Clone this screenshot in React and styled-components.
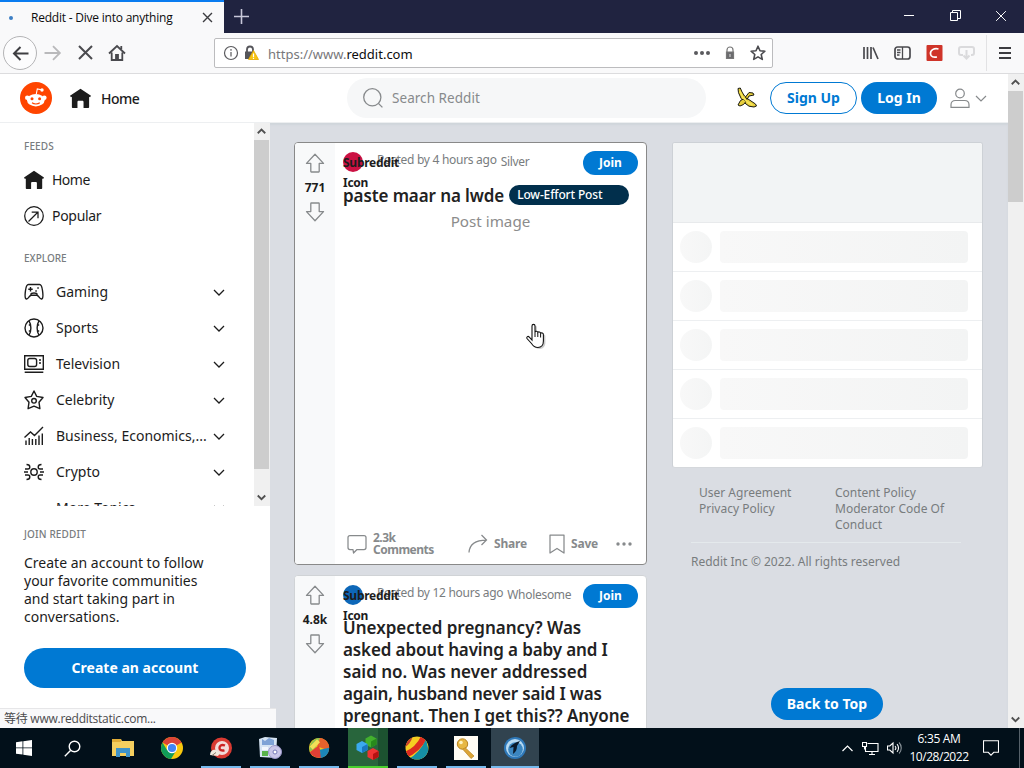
import React from "react";
import styled, { createGlobalStyle, css } from "styled-components";

const GlobalStyle = createGlobalStyle`
  * { box-sizing: border-box; }
  html, body { margin: 0; padding: 0; overflow: hidden; }
  body { font-family: "Noto Sans", "Open Sans", sans-serif; color: #1c1c1c; }
  svg { display: block; flex: none; }
  button { font-family: inherit; margin: 0; padding: 0; border: 0; }
`;

const Screen = styled.div`
  width: 1024px;
  height: 768px;
  display: flex;
  flex-direction: column;
  overflow: hidden;
  background: #dadde3;
`;

const Label = styled.span`
  white-space: nowrap;
  letter-spacing: ${(p) => p.$ls || 0}px;
`;

/* ---------- Browser chrome ---------- */

const TitleBar = styled.div`
  height: 33px;
  flex: none;
  display: flex;
  background: #202340;
`;

const Tab = styled.div`
  width: 224px;
  height: 33px;
  display: flex;
  align-items: center;
  border-top: 2px solid #0a7cf0;
  background: #f9f9fa;
  font: 12px/16px "Open Sans", sans-serif;
  color: #0c0c0d;
`;

const Throbber = styled.i`
  width: 4px;
  height: 4px;
  border-radius: 50%;
  margin: 0 18px 0 9px;
  background: #3d7fc4;
`;

const TabClose = styled.div`
  margin-left: auto;
  padding-right: 11px;
`;

const NewTab = styled.div`
  padding: 9px 0 0 10px;
`;

const WindowControls = styled.div`
  margin-left: auto;
  display: flex;
  align-items: center;
  gap: 34.5px;
  padding: 0 17px 2px 0;
`;

const NavBar = styled.div`
  height: 41px;
  flex: none;
  display: flex;
  align-items: center;
  padding-left: 3px;
  background: #f9f9fa;
  border-bottom: 1px solid #dcdcde;
`;

const BackButton = styled.div`
  width: 34px;
  height: 34px;
  margin-right: 7px;
  display: flex;
  align-items: center;
  justify-content: center;
  border: 1px solid #b4b4b6;
  border-radius: 50%;
  background: #fcfcfd;
`;

const NavIcons = styled.div`
  display: flex;
  gap: 14.5px;
`;

const AddressBar = styled.div`
  width: 559px;
  height: 30px;
  margin-left: 88px;
  display: flex;
  align-items: center;
  padding: 0 6px 0 8px;
  border: 1px solid #bcbcbe;
  border-radius: 2px;
  background: #fff;
  font: 13px/18px "Noto Sans", sans-serif;
  color: #77777a;
  b { font-weight: 400; color: #0c0c0d; }
`;

const UrlText = styled(Label)`
  margin-left: 12px;
  padding-top: 2px;
  flex: 1;
`;

const UrlActions = styled.div`
  display: flex;
  align-items: center;
  gap: 12px;
`;

const ToolIcons = styled.div`
  margin-left: auto;
  height: 40px;
  display: flex;
  align-items: center;
  gap: 15px;
`;

const MenuSlot = styled.div`
  height: 36px;
  width: 38px;
  margin-left: -4px;
  display: flex;
  align-items: center;
  padding-left: 11px;
  border-left: 1px solid #e2e2e4;
`;

const Viewport = styled.div`
  height: 654px;
  flex: none;
  display: flex;
  position: relative;
  overflow: hidden;
`;

const Scrollbar = styled.div`
  width: 16px;
  height: ${(p) => p.$h}px;
  flex: none;
  display: flex;
  flex-direction: column;
  align-items: center;
  padding-right: 1px;
  background: #f0f0f0;
`;

const ScrollArrow = styled.div`
  height: 17px;
  display: flex;
  align-items: center;
`;

const Thumb = styled.div`
  width: 15px;
  height: ${(p) => p.$h}px;
  margin-bottom: auto;
  background: #cdcdcd;
`;

const StatusText = styled.div`
  position: absolute;
  left: 0;
  bottom: 0;
  width: 276px;
  height: 20px;
  padding-left: 4px;
  background: #f9f9fa;
  border-top: 1px solid #e6e6e8;
  font: 12px/19px "Open Sans", "Noto Sans CJK SC", sans-serif;
  color: #4a4a4c;
`;

/* ---------- Reddit page ---------- */

const Page = styled.div`
  width: 1008px;
  height: 654px;
  display: flex;
  flex-direction: column;
`;

const Header = styled.header`
  height: 49px;
  flex: none;
  display: flex;
  align-items: center;
  padding: 0 0 0 20px;
  background: #fff;
  border-bottom: 1px solid #edeff1;
`;

const HomeLink = styled.div`
  width: 258px;
  margin-left: 18px;
  display: flex;
  align-items: center;
  gap: 10px;
  padding-top: 1px;
  font-size: 14px;
  font-weight: 500;
  line-height: 20px;
`;

const Search = styled.div`
  width: 359px;
  height: 40px;
  flex: none;
  margin-left: 19px;
  display: flex;
  align-items: center;
  gap: 9px;
  padding-left: 16px;
  border-radius: 20px;
  background: #f6f7f8;
  font-size: 13.5px;
  color: #878a8c;
`;

const Pill = styled.button`
  width: ${(p) => p.$w}px;
  height: ${(p) => p.$h || 32}px;
  flex: none;
  padding-bottom: 2px;
  border-radius: 20px;
  font-size: ${(p) => p.$size || 14}px;
  font-weight: 700;
  line-height: 17px;
  ${(p) =>
    p.$outline
      ? css`background: #fff; color: #0079d3; border: 1px solid #0079d3;`
      : css`background: #0079d3; color: #fff;`}
`;

const HeaderActions = styled.div`
  display: flex;
  align-items: center;
  margin-left: 30px;
  ${Pill} + ${Pill} { margin-left: 4px; }
`;

const BananaSlot = styled.div`
  margin-right: 12px;
`;

const UserMenu = styled.div`
  display: flex;
  align-items: center;
  gap: 5px;
  margin-left: 13px;
`;

const Body = styled.div`
  height: 605px;
  display: flex;
  background: #dadde3;
  box-shadow: inset 0 2px 2px #d0d5db;
`;

const Sidebar = styled.aside`
  width: 270px;
  height: 605px;
  display: flex;
  flex-direction: column;
  background: #fff;
`;

const SideScroll = styled.div`
  height: 383px;
  display: flex;
  overflow: hidden;
`;

const SideList = styled.div`
  width: 254px;
  padding-top: 16px;
`;

const SideHeading = styled.div`
  height: 14px;
  padding-left: ${(p) => (p.$flush ? 0 : 24)}px;
  margin: ${(p) => p.$m || "0"};
  font: 500 10px/14px "Noto Sans", sans-serif;
  color: #787c7e;
`;

const SideItem = styled.div`
  height: 36px;
  display: flex;
  align-items: center;
  padding: 0 29px 0 24px;
  font-size: 14px;
  line-height: 18px;
  & > :first-child { margin-right: ${(p) => p.$gap || 12}px; }
  & > svg:last-child { margin-left: auto; }
`;

const IconGap = styled.i`
  width: 20px;
  flex: none;
`;

const JoinPanel = styled.div`
  padding: 21px 24px 0;
`;

const JoinCopy = styled.p`
  margin: 13px 0 22px;
  font-size: 14px;
  line-height: 18px;
`;

const Feed = styled.main`
  width: 353px;
  margin-left: 24px;
  padding-top: 19px;
  display: flex;
  flex-direction: column;
  gap: 10px;
  overflow: hidden;
`;

const Card = styled.article`
  height: ${(p) => p.$h}px;
  flex: none;
  display: flex;
  border: 1px solid ${(p) => (p.$active ? "#898989" : "#d0d3d6")};
  border-radius: 4px;
  background: #fff;
  overflow: hidden;
`;

const Votes = styled.div`
  width: 40px;
  flex: none;
  display: flex;
  flex-direction: column;
  align-items: center;
  padding-top: ${(p) => p.$top || 10}px;
  gap: 6px;
  background: #f8f9fa;
  font-size: 12px;
  font-weight: 700;
  line-height: 17px;
`;

const PostMain = styled.div`
  width: 303px;
  display: flex;
  flex-direction: column;
  padding-left: 8px;
`;

const PostMeta = styled.div`
  height: 42px;
  flex: none;
  display: flex;
  padding-top: 8px;
  font-size: 12px;
  line-height: 18px;
  color: #787c7e;
  ${Pill} { margin-left: auto; padding-bottom: 1px; }
`;

const Avatar = styled.div`
  width: 20px;
  height: 20px;
  margin: 1px 14px 0 0;
  position: relative;
  border-radius: 50%;
  background: ${(p) => p.$c};
`;

const AltText = styled.div`
  position: absolute;
  left: 0;
  top: 1px;
  width: 60px;
  font-size: 12px;
  font-weight: 700;
  line-height: 20px;
  letter-spacing: -0.25px;
  color: #1c1c1c;
`;

const Award = styled(Label)`
  padding: 2px 0 0 4px;
`;

const Title = styled.h3`
  margin: 0;
  display: flex;
  align-items: center;
  gap: 5px;
  font-size: 17px;
  font-weight: 600;
  line-height: 22px;
  color: #222;
`;

const TitleBlock = styled(Title)`
  flex-direction: column;
  align-items: flex-start;
  gap: 0;
  margin-top: -1px;
`;

const Flair = styled.span`
  width: 120px;
  height: 20px;
  margin-top: -2px;
  padding-left: 8px;
  border-radius: 20px;
  background: #012f4c;
  color: #fff;
  font-size: 12px;
  font-weight: 500;
  line-height: 20px;
`;

const MediaAlt = styled.div`
  height: 322px;
  padding-top: 2px;
  font-size: 15.2px;
  line-height: 24px;
  text-align: center;
  color: #8c8c8c;
`;

const Actions = styled.div`
  height: 30px;
  display: flex;
  align-items: center;
  padding-left: 4px;
  color: #878a8c;
  font-size: 12px;
  font-weight: 700;
  line-height: 12px;
`;

const Action = styled.div`
  width: ${(p) => p.$w}px;
  display: flex;
  align-items: center;
  gap: ${(p) => p.$gap || 6}px;
`;

const Rail = styled.aside`
  width: 311px;
  margin-left: 25px;
  padding-top: 19px;
`;

const Skeleton = styled.div`
  height: 326px;
  border: 1px solid #cdd1d6;
  border-bottom-color: #d5d8dc;
  border-radius: 3px;
  background: #fff;
  overflow: hidden;
`;

const SkeletonBanner = styled.div`
  height: 80px;
  background: #f2f4f5;
  border-bottom: 1px solid #e8eaec;
`;

const SkeletonRow = styled.div`
  height: 49px;
  display: flex;
  align-items: center;
  gap: 8px;
  padding-left: 7px;
  border-bottom: 1px solid #edeff1;
  &:last-child { border-bottom: 0; height: 48px; }
`;

const Dot = styled.div`
  width: 32px;
  height: 32px;
  border-radius: 50%;
  background: linear-gradient(90deg, #f8f8f8, #f4f5f5);
`;

const Bar = styled.div`
  width: 248px;
  height: 32px;
  border-radius: 4px;
  background: linear-gradient(90deg, #f8f8f8, #f3f4f4);
`;

const Legal = styled.div`
  margin-top: 17px;
  padding: 0 22px 0 19px;
  font-size: 12px;
  line-height: 16px;
  color: #787c7e;
`;

const LegalGrid = styled.div`
  display: grid;
  grid-template-columns: 136px 1fr;
  padding: 0 0 9px 8px;
  border-bottom: 1px solid #e4e9ec;
`;

const Copyright = styled.div`
  padding-top: 11px;
`;

const BackToTop = styled(Pill)`
  position: absolute;
  left: 771px;
  top: 614px;
`;

/* ---------- Taskbar ---------- */

const Taskbar = styled.div`
  height: 40px;
  flex: none;
  display: flex;
  background: #02101a;
  color: #fff;
`;

const TaskItem = styled.div`
  width: ${(p) => p.$w || 49}px;
  height: 40px;
  display: flex;
  align-items: center;
  justify-content: center;
`;

const TaskButton = styled.div`
  width: 40px;
  height: 40px;
  margin-right: 9px;
  display: flex;
  align-items: center;
  justify-content: center;
  padding-top: 2px;
  border-bottom: 2px solid ${(p) => p.$line || "#76b9ed"};
  background: ${(p) => p.$bg || "transparent"};
`;

const ActiveTask = styled(TaskButton)`
  width: 48px;
  margin: 0 0 0 -4px;
  background: #31434f;
`;

const Tray = styled.div`
  margin-left: auto;
  display: flex;
  align-items: center;
  gap: 8px;
`;

const Clock = styled.div`
  width: 58px;
  margin: 0 1px 0 -1px;
  padding-bottom: 1px;
  font: 12px/18px "Open Sans", sans-serif;
  display: flex;
  flex-direction: column;
  align-items: center;
`;

const NoticeSlot = styled.div`
  margin-left: 6px;
`;

const ShowDesktop = styled.div`
  width: 5px;
  height: 40px;
  margin-left: 12px;
  border-left: 1px solid #56616a;
`;

const Cursor = styled.div`
  position: absolute;
  left: 526px;
  top: 249px;
`;

/* ---------- Icons ---------- */

const Svg = ({ w = 20, h, vb, sw = 1.25, c = "#1c1c1c", children }) => (
  <svg width={w} height={h || w} viewBox={vb || "0 0 20 20"} fill="none" stroke={c} strokeWidth={sw}>
    {children}
  </svg>
);

const Chevron = ({ w = 12, up, c = "#1c1c1c", sw = 1.3 }) => (
  <Svg w={w} h={w * 0.75} vb="0 0 12 9" c={c} sw={sw}>
    <path d={up ? "M1 7l5-5 5 5" : "M1 2l5 5 5-5"} />
  </Svg>
);

const Cross = ({ w, c, sw }) => (
  <Svg w={w} vb="0 0 16 16" c={c} sw={sw}><path d="M1.5 1.5l13 13M14.5 1.5l-13 13" /></Svg>
);

const HouseIcon = ({ w = 20 }) => (
  <Svg w={w} sw={0}>
    <path fill="#1c1c1c" d="M10 .7l10 6.7-.9 1.5-.9-.5V18c0 .6-.4 1-1 1h-4.300V13.300c0-.7-.5-1.200-1.200-1.200H8.300c-.7 0-1.200.5-1.200 1.200V19H2.800c-.6 0-1-.4-1-1V8.400l-.9.5L0 7.400z" />
  </Svg>
);

const ArrowVote = ({ down }) => (
  <Svg w={20} c="#878a8c" sw={1.3}>
    <path transform={down ? "rotate(180 10 10)" : undefined} strokeLinejoin="round" d="M10 1.200L1.500 10.400h4.300v8.100c0 .3.200.5.500.5h7.400c.3 0 .5-.2.5-.5v-8.100h4.300z" />
  </Svg>
);

const Snoo = () => (
  <svg width="32" height="32" viewBox="0 0 32 32">
    <circle cx="16" cy="16" r="16" fill="#ff4500" />
    <path d="M16.300 12l1-5 4 .8" stroke="#fff" strokeWidth="1.100" fill="none" />
    <circle cx="22" cy="8" r="1.700" fill="#fff" />
    <circle cx="7.300" cy="15.800" r="2.300" fill="#fff" />
    <circle cx="24.300" cy="15.800" r="2.300" fill="#fff" />
    <ellipse cx="15.800" cy="18.200" rx="8.800" ry="6.200" fill="#fff" />
    <circle cx="12" cy="16.800" r="1.500" fill="#ff4500" />
    <circle cx="19.600" cy="16.800" r="1.500" fill="#ff4500" />
    <path d="M12 20.800c2 1.500 5.800 1.500 7.800 0" stroke="#ff4500" strokeWidth="1.100" fill="none" />
  </svg>
);

const Gamepad = () => (
  <Svg sw={1.4}>
    <path d="M4.500 2.500h11c2 0 2.500 2 3 6 .5 3.500 1 8-.8 8.500-2.200.6-2.800-3.800-5-3.800H7.300c-2.200 0-2.800 4.400-5 3.800C.5 16.500 1 12 1.500 8.500c.5-4 1-6 3-6z" />
    <path d="M6.500 5v4.500M4.300 7.200h4.400M11.300 9h1.500M13.300 6h1.500" />
    <path d="M7 13.200v-1c0-1 1-1.200 3-1.200s3 .2 3 1.200v1" />
  </Svg>
);
const BallIcon = () => (
  <Svg sw={1.4}><circle cx="10" cy="10" r="9" /><path d="M5 2.800c2.500 4 2.500 10.400 0 14.400M15 2.800c-2.500 4-2.500 10.400 0 14.400M4.800 7h2M4.800 13h2M13.200 7h2M13.200 13h2" /></Svg>
);
const TvIcon = () => (
  <Svg sw={1.4}><path d="M.7 1.700h18.600v13.600H.7zM.7 18.300h18.600" /><rect x="3.800" y="4.500" width="8.800" height="8" rx="2" /><path d="M15 6h2M15 9h2" strokeWidth="1.700" /></Svg>
);
const StarIcon = () => (
  <Svg sw={1.4}><path strokeLinejoin="round" d="M10 1l2.700 5.400 6.300 1.100-4 4.700.9 6.500-5.900-2.600-5.900 2.600.9-6.500-4-4.700 6.300-1.100z" /><circle cx="10" cy="10.800" r="2.300" /></Svg>
);
const ChartIcon = () => (
  <Svg sw={1.4}><path d="M.5 11.500L6.500 6l4 3.500L19 1M2 19v-4.500M5.200 19v-7M8.400 19v-6M11.800 19v-6M15 19V9.500M18.300 19V7.500" /></Svg>
);
const CryptoIcon = () => (
  <Svg sw={1.4}>
    <circle cx="10" cy="10" r="3.200" /><path d="M0 10h4M16 10h4" />
    <path d="M2.500 2.500c2.300 0 3.300.8 3.300 2.500S5 7 4 7H1M2.500 17.500c2.300 0 3.300-.8 3.300-2.500S5 13 4 13H1M17.500 2.500c-2.300 0-3.300.8-3.300 2.500s.8 2 1.800 2h3M17.500 17.500c-2.300 0-3.300-.8-3.300-2.500s.8-2 1.800-2h3" />
  </Svg>
);
const PopularIcon = () => (
  <Svg sw={1.25}><circle cx="10" cy="10" r="9.300" /><path d="M4.500 15.500l9.300-9.300M7.700 6h6.300v6.300" /></Svg>
);

const Banana = () => (
  <svg width="22" height="22" viewBox="0 0 22 22" stroke="#1a1a10" strokeWidth="1" strokeLinejoin="round">
    <path d="M2 1.500l2.300-.5 1.700 4 2.500 4 3.500 3 7.500 5 1 2-2.500 1-5-.8-4-3-4-5-2.500-5.500z" fill="#e8cf3c" />
    <path d="M9.500 10l3.500-4.500 4 .5 1 2-5 1-2 3.500z" fill="#e8cf3c" />
    <path d="M7.500 12l-3 1.500L2 18l2 1 3.500-1.500 2.500-3z" fill="#e8cf3c" />
    <path d="M4 4l2.500 6 5 5 5 3" stroke="#f7e65a" strokeWidth="1.500" fill="none" />
  </svg>
);

const RainbowBall = () => (
  <svg width="22" height="22" viewBox="0 0 24 24">
    <circle cx="12" cy="12" r="11" fill="#f2c81c" />
    <path d="M1.500 12C3 4 9 .5 13 1.200L8 12 2 16z" fill="#8cc152" />
    <path d="M13 1.100c7 .5 12 8 9.500 14L10 10z" fill="#e8622d" />
    <path d="M2 16.500L12 9l3 13.500c-6 1-11-2-13-6z" fill="#e23f35" />
    <path d="M14 22.800l-1-9 10-2c0 7-4 10-9 11z" fill="#1b86b8" />
    <path d="M3.500 12l8-8" stroke="#f3df58" strokeWidth="4.500" />
  </svg>
);

const StripedBall = () => (
  <svg width="24" height="24" viewBox="0 0 24 24">
    <clipPath id="striped-ball"><circle cx="12" cy="12" r="11.500" /></clipPath>
    <g clipPath="url(#striped-ball)" fill="none">
      <circle cx="12" cy="12" r="12" fill="#f5cd22" />
      <path d="M2 24Q15 17 21 3l5 22z" fill="#158fa5" />
      <path d="M0 19Q13 14 19 1" stroke="#dd2a20" strokeWidth="6" />
      <path d="M-2 10Q4 7 6-1" stroke="#c9402b" strokeWidth="4" />
    </g>
  </svg>
);

const Hex = ({ x, y, c, d }) => (
  <g transform={`translate(${x} ${y})`}>
    <path d="M0-6l5.500 3v6L0 6l-5.500-3v-6z" fill={c} /><path d="M0 0l5.500-3v6L0 6z" fill={d} />
  </g>
);

/* ---------- Data ---------- */

const topics = [
  ["Gaming", Gamepad],
  ["Sports", BallIcon],
  ["Television", TvIcon],
  ["Celebrity", StarIcon],
  ["Business, Economics,...", ChartIcon],
  ["Crypto", CryptoIcon],
  ["More Topics", IconGap],
];

const pregnancyTitle = [
  ["Unexpected pregnancy? Was", 0],
  ["asked about having a baby and I", -0.12],
  ["said no. Was never addressed", 0],
  ["again, husband never said I was", -0.2],
  ["pregnant. Then I get this?? Anyone", -0.05],
];

const PostHeader = ({ color, time, award }) => (
  <PostMeta>
    <Avatar $c={color}><AltText>Subreddit Icon</AltText></Avatar>
    <Label $ls={-0.28}>Posted by {time} ago</Label>
    <Award $ls={-0.3}>{award}</Award>
    <Pill $w={55} $h={24} $size={12}>Join</Pill>
  </PostMeta>
);

const Browser = () => (
  <>
    <TitleBar>
      <Tab>
        <Throbber />
        <Label $ls={-0.22}>Reddit - Dive into anything</Label>
        <TabClose><Cross w={11} c="#3c3c40" sw={2} /></TabClose>
      </Tab>
      <NewTab><Svg w={15} vb="0 0 15 15" c="#c8c8da" sw={1.6}><path d="M7.500 0v15M0 7.500h15" /></Svg></NewTab>
      <WindowControls>
        <Svg w={11} vb="0 0 11 11" c="#fff" sw={1}><path d="M0 5.500h10" /></Svg>
        <Svg w={11} vb="0 0 11 11" c="#fff" sw={1}><path d="M.5 2.500h7v8h-7zM2.500 2.500v-2h8v8h-3" /></Svg>
        <Cross w={12} c="#fff" sw={1.300} />
      </WindowControls>
    </TitleBar>
    <NavBar>
      <BackButton>
        <Svg w={17} vb="0 0 17 17" c="#3e3e42" sw={2}><path d="M16.500 8.500H2M8.500 2L2 8.500 8.500 15" /></Svg>
      </BackButton>
      <NavIcons>
        <Svg w={18} vb="0 0 17 17" c="#b9b9bb" sw={1.7}><path d="M.5 8.500H15M8.500 2L15 8.500 8.500 15" /></Svg>
        <Svg w={17} vb="0 0 17 17" c="#4a4a4e" sw={2}><path d="M2 2l13 13M15 2L2 15" /></Svg>
        <Svg w={18} vb="0 0 18 18" c="#4a4a4e" sw={1.8}>
          <path d="M1 9.500L9 2l8 7.500M3.700 8.500V16h10.600V8.500M13.300 5V2" /><path d="M8 16v-5h2v5z" fill="#4a4a4e" />
        </Svg>
      </NavIcons>
      <AddressBar>
        <Svg w={16} vb="0 0 16 16" c="#5a5a5e" sw={1.200}><circle cx="8" cy="8" r="6.500" /><path d="M8 7v4.500M8 4v1.700" /></Svg>
        <Svg w={20} h={16} vb="0 0 20 16" c="#55555a" sw={1.800}>
          <g transform="translate(6 0)">
            <path d="M2 7V4.500a3 3 0 016 0V7" /><path d="M0 6.500h9V14H0z" fill="#55555a" stroke="none" />
            <path d="M8.500 5.500l5 9h-10z" fill="#f9c511" stroke="#e2a800" strokeWidth=".8" /><path d="M8.500 8.500V12M8.500 12.700V14" stroke="#fff" strokeWidth="1.200" />
          </g>
        </Svg>
        <UrlText as={UrlLabel} $ls={-0.08}>https://www.<b>reddit.com</b></UrlText>
        <UrlActions>
          <Svg w={16} h={6} vb="0 0 16 6" c="none"><g fill="#5a5a5e"><circle cx="2" cy="3" r="2" /><circle cx="8" cy="3" r="2" /><circle cx="14" cy="3" r="2" /></g></Svg>
          <Svg w={16} vb="0 0 16 16" c="#777" sw={1.200}><path d="M5 7V5a3 3 0 016 0v2" /><path d="M4.500 7h7v6.500h-7z" fill="#6b6b6e" /><path d="M8 9v3" stroke="#ccc" /></Svg>
          <Svg w={16} vb="0 0 16 16" c="#4a4a4e" sw={1.600}><path strokeLinejoin="round" d="M8 1.200l2 4.500 4.900.5-3.700 3.300 1.100 4.900L8 11.900l-4.300 2.500 1.100-4.900L1.100 6.200 6 5.700z" /></Svg>
        </UrlActions>
      </AddressBar>
      <ToolIcons>
        <Svg w={17} h={16} vb="0 0 17 16" c="#4a4a4e" sw={1.700}><path d="M2 2v12M5.500 2v12M9 2v12M11 2.500L16 14" /></Svg>
        <Svg w={17} h={16} vb="0 0 17 16" c="#4a4a4e" sw={1.700}><rect x="1" y="2" width="15" height="12" rx="2.500" /><path d="M8.500 2v12M3 5h3.500M3 7.500h3.500M3 10h2.500" strokeWidth="1.300" /></Svg>
        <svg width="17" height="16" viewBox="0 0 17 16"><rect x=".5" width="16" height="16" rx="1" fill="#cf3429" /><path d="M12.500 4C8 3 4 5 4.500 9c.3 3 3 3.500 6.500 3" stroke="#fff" strokeWidth="1.700" fill="none" /></svg>
        <Svg w={17} h={16} vb="0 0 17 16" c="#dadadc" sw={2}><path d="M5 10H3a2 2 0 01-2-2V4a2 2 0 012-2h11a2 2 0 012 2v4a2 2 0 01-2 2h-1M8.500 5v8M5.500 10.500l3 3 3-3" /></Svg>
        <MenuSlot><Svg w={14} vb="0 0 14 14" c="#3c3c40" sw={2}><path d="M1 2h12M1 7h12M1 12h12" /></Svg></MenuSlot>
      </ToolIcons>
    </NavBar>
  </>
);

const UrlLabel = styled(Label)`
  margin-left: 9px;
`;

const RedditHeader = () => (
  <Header>
    <Snoo />
    <HomeLink><HouseIcon w={21} /><Label $ls={-0.5}>Home</Label></HomeLink>
    <Search>
      <Svg c="#878a8c" sw={1.3}><circle cx="9.300" cy="9.300" r="8.600" /><path d="M15.400 15.400l4 4" /></Svg>
      <Label $ls={0.05}>Search Reddit</Label>
    </Search>
    <HeaderActions>
      <BananaSlot><Banana /></BananaSlot>
      <Pill $w={87} $outline>Sign Up</Pill>
      <Pill $w={76}>Log In</Pill>
      <UserMenu>
        <Svg w={20} c="#878a8c" sw={1.200}><circle cx="10" cy="5.500" r="4.300" /><path d="M1 19.300v-2.500c0-2.600 1.700-4.300 4.300-4.300h9.400c2.600 0 4.300 1.700 4.300 4.300v2.500z" /></Svg>
        <Chevron c="#878a8c" sw={1.200} />
      </UserMenu>
    </HeaderActions>
  </Header>
);

const SidePanel = () => (
  <Sidebar>
    <SideScroll>
      <SideList>
        <SideHeading $m="0 0 9px"><Label $ls={0.1}>FEEDS</Label></SideHeading>
        <SideItem $gap={8}><HouseIcon /><Label $ls={-0.5}>Home</Label></SideItem>
        <SideItem $gap={8}><PopularIcon /><Label $ls={-0.3}>Popular</Label></SideItem>
        <SideHeading $m="17px 0 9px"><Label>EXPLORE</Label></SideHeading>
        {topics.map(([name, Icon]) => (
          <SideItem key={name}><Icon /><Label>{name}</Label><Chevron /></SideItem>
        ))}
      </SideList>
      <Scrollbar $h={383}>
        <ScrollArrow><Chevron w={9} up c="#505050" sw={2.400} /></ScrollArrow>
        <Thumb $h={329} />
        <ScrollArrow><Chevron w={9} c="#505050" sw={2.400} /></ScrollArrow>
      </Scrollbar>
    </SideScroll>
    <JoinPanel>
      <SideHeading $flush><Label $ls={0.15}>JOIN REDDIT</Label></SideHeading>
      <JoinCopy>
        Create an account to follow<br />your favorite communities<br />and start taking part in<br />conversations.
      </JoinCopy>
      <Pill $w={222} $h={40}>Create an account</Pill>
    </JoinPanel>
  </Sidebar>
);

const Posts = () => (
  <Feed>
    <Card $h={423} $active>
      <Votes><ArrowVote /><span>771</span><ArrowVote down /></Votes>
      <PostMain>
        <PostHeader color="#cb1143" time="4 hours" award="Silver" />
        <Title><Label $ls={-0.1}>paste maar na lwde</Label><Flair><Label $ls={-0.15}>Low-Effort Post</Label></Flair></Title>
        <MediaAlt><Label $ls={0}>Post image</Label></MediaAlt>
        <Actions>
          <Action $w={121}>
            <Svg c="#878a8c"><path strokeLinejoin="round" d="M3 1.500h14c1 0 2 1 2 2v10c0 1-1 2-2 2h-7l-3.500 3.500-.5-3.500H3c-1 0-2-1-2-2v-10c0-1 1-2 2-2z" /></Svg>
            <Label $ls={-0.5}>2.3k<br />Comments</Label>
          </Action>
          <Action $w={79}>
            <Svg c="#878a8c"><path d="M1 18.500C1.500 10 8 6 18.500 6M13.500 1l5 5-5 5" /></Svg>
            <Label $ls={-0.2}>Share</Label>
          </Action>
          <Action $w={69} $gap={4}>
            <Svg c="#878a8c"><path strokeLinejoin="round" d="M3 1h14v18l-7-4.500L3 19z" /></Svg>
            <Label $ls={-0.2}>Save</Label>
          </Action>
          <Svg w={16} h={4} vb="0 0 16 4" c="none"><g fill="#878a8c"><circle cx="2" cy="2" r="1.700" /><circle cx="8" cy="2" r="1.700" /><circle cx="14" cy="2" r="1.700" /></g></Svg>
        </Actions>
      </PostMain>
    </Card>
    <Card $h={260}>
      <Votes $top={9}><ArrowVote /><span>4.8k</span><ArrowVote down /></Votes>
      <PostMain>
        <PostHeader color="#0d67b8" time="12 hours" award="Wholesome" />
        <TitleBlock>
          {pregnancyTitle.map(([line, ls]) => <Label key={line} $ls={ls}>{line}</Label>)}
        </TitleBlock>
      </PostMain>
    </Card>
  </Feed>
);

const RightRail = () => (
  <Rail>
    <Skeleton>
      <SkeletonBanner />
      {[0, 1, 2, 3, 4].map((i) => <SkeletonRow key={i}><Dot /><Bar /></SkeletonRow>)}
    </Skeleton>
    <Legal>
      <LegalGrid>
        <div>User Agreement<br />Privacy Policy</div>
        <div>Content Policy<br />Moderator Code Of<br />Conduct</div>
      </LegalGrid>
      <Copyright><Label>Reddit Inc © 2022. All rights reserved</Label></Copyright>
    </Legal>
  </Rail>
);

const Tasks = () => (
  <Taskbar>
    <TaskItem $w={48}><svg width="16" height="16" viewBox="0 0 16 16" fill="#fff"><path d="M0 2.200L6.500 1.300v6.200H0zM7.300 1.200L16 0v7.500H7.300zM0 8.300h6.500v6.300L0 13.700zM7.300 8.300H16V16l-8.700-1.200z" /></svg></TaskItem>
    <TaskItem $w={49}><Svg w={17} vb="0 0 17 17" c="#fff" sw={1.400}><circle cx="10.500" cy="6.500" r="5.300" /><path d="M6.500 10.500L.8 16.200" /></Svg></TaskItem>
    <TaskItem $w={52}>
      <svg width="22" height="20" viewBox="0 0 22 20"><path d="M0 1h9l1 2h12v15H0z" fill="#f5cf5f" /><path d="M0 1h9v3H0z" fill="#e2ad37" /><path d="M4 10h14v9h-4v-4H8v4H4z" fill="#3f93c9" /></svg>
    </TaskItem>
    <TaskItem $w={46}>
      <svg width="22" height="22" viewBox="0 0 22 22"><circle cx="11" cy="11" r="11" fill="#f9c80e" /><path d="M11 11L1.500 5.500A11 11 0 0120.500 5.500z" fill="#dc4437" /><path d="M1.500 5.500A11 11 0 0010 22l5.500-9L11 11 6 13z" fill="#109d58" /><path d="M11 5.500h9.500" stroke="#dc4437" /><circle cx="11" cy="11" r="5.200" fill="#fff" /><circle cx="11" cy="11" r="4.100" fill="#4285f4" /></svg>
    </TaskItem>
    <TaskItem $w={6} />
    <TaskButton>
      <svg width="24" height="24" viewBox="0 0 24 24"><circle cx="12.500" cy="12" r="10.500" fill="#d93a32" /><circle cx="13" cy="12" r="7" fill="#f3dcda" /><path d="M16 9.500c-4-1.500-5.500.5-5.500 2.500s2 3 5 2.300" stroke="#cc2424" strokeWidth="2.400" fill="none" /><path d="M1 19c0-4 3-6 6-5l4 3-2 3z" fill="#f1e9dd" /><path d="M3 19.500l4-3" stroke="#876" /></svg>
    </TaskButton>
    <TaskButton>
      <svg width="24" height="24" viewBox="0 0 24 24"><path d="M1 3l6-2 12 1-1 20-16-1z" fill="#d6e4f3" /><path d="M4 3l3 2 4-3 5 2v5H4z" fill="#7fa3d6" /><path d="M4 11h6v3H4z" fill="#f4f8fd" /><path d="M4 15h6v5H4z" fill="#59b34b" /><circle cx="17" cy="16" r="6.500" fill="#c9c6e8" stroke="#9a96c8" /><circle cx="17" cy="16" r="2" fill="#fff" stroke="#777bb8" /></svg>
    </TaskButton>
    <TaskButton><RainbowBall /></TaskButton>
    <TaskButton $line="#49cf2e" $bg="linear-gradient(90deg, #28653c 30px, #1c5230 30px)">
      <svg width="26" height="26" viewBox="0 0 26 26"><Hex x={16} y={6.5} c="#43b02d" d="#278a1c" /><Hex x={7} y={12} c="#3ba9ef" d="#1877c2" /><Hex x={18} y={19} c="#ee3434" d="#b51212" /></svg>
    </TaskButton>
    <TaskButton><StripedBall /></TaskButton>
    <TaskButton>
      <svg width="24" height="24" viewBox="0 0 24 24"><path d="M0 0h24v24H0z" fill="#fffdf5" /><circle cx="8.500" cy="8" r="5.200" fill="#e7b843" stroke="#b78320" /><path d="M11 11.500l9 8.500-3 2.500-8-9z" fill="#dca535" stroke="#b78320" strokeWidth=".7" /><circle cx="7" cy="6.500" r="1.800" fill="#fff3c0" /></svg>
    </TaskButton>
    <ActiveTask>
      <svg width="24" height="24" viewBox="0 0 24 24"><circle cx="12" cy="12" r="11" fill="#2f79b9" /><circle cx="12" cy="12" r="9" fill="#b9dbf2" /><circle cx="12.500" cy="13.500" r="7.300" fill="#3b86c0" /><path d="M17 5c-4 1-8 3-10.500 7l4-1-.5 7c3-2 4-5 4-8z" fill="#0b1a2a" /></svg>
    </ActiveTask>
    <Tray>
      <Svg w={13} h={9} vb="0 0 12 9" c="#fff" sw={1.200}><path d="M1 7l5-5 5 5" /></Svg>
      <Svg w={17} h={15} vb="0 0 17 15" c="#fff" sw={1.100}><path d="M5.500 2.500H16v8H3.500V6M7 13.500h6M10 10.500v3M.5 1.500h4v4h-4zM2.500 5.500v3" /></Svg>
      <Svg w={16} h={14} vb="0 0 16 14" c="#fff" sw={1.100}><path d="M.5 5h2.300L6 2v10L2.800 9H.5zM8 5c.9 1 .9 3 0 4M10 3.200c2 2 2 5.600 0 7.600" /><path d="M12 1.500c3 3 3 8 0 11" stroke="#8a9399" /></Svg>
      <Clock><Label $ls={-0.35}>6:35 AM</Label><Label $ls={-0.45}>10/28/2022</Label></Clock>
      <NoticeSlot><Svg w={16} h={16} vb="0 0 16 16" c="#fff" sw={1.100}><path d="M.5.8h15v11.500h-4.700L8 15.200l-2.800-2.900H.5z" /></Svg></NoticeSlot>
      <ShowDesktop />
    </Tray>
  </Taskbar>
);

export default function App() {
  return (
    <Screen>
      <GlobalStyle />
      <Browser />
      <Viewport>
        <Page>
          <RedditHeader />
          <Body>
            <SidePanel />
            <Posts />
            <RightRail />
          </Body>
        </Page>
        <Scrollbar $h={654}>
          <ScrollArrow><Chevron w={9} up c="#505050" sw={2.400} /></ScrollArrow>
          <Thumb $h={111} />
          <ScrollArrow><Chevron w={9} c="#505050" sw={2.400} /></ScrollArrow>
        </Scrollbar>
        <BackToTop $w={112}>Back to Top</BackToTop>
        <StatusText><Label $ls={-0.25}>等待 www.redditstatic.com...</Label></StatusText>
        <Cursor>
          <svg width="26" height="28" viewBox="0 0 26 28">
            <path d="M6 3c0-2.200 3-2.200 3 0v6c.5-1.200 2.500-1 2.800.5.700-1 2.500-.7 2.800.8.900-.8 2.800-.4 2.800 1.400V18c0 3.500-2 6.500-5.500 6.500-3.500 0-4.900-1.500-6.400-4L1 15.500c-.7-1.800 1-2.800 2.300-1.400L6 17z" fill="#000" opacity=".2" transform="translate(2 1.500)" />
            <path d="M6 3c0-2.200 3-2.200 3 0v6c.5-1.200 2.500-1 2.800.5.700-1 2.500-.7 2.800.8.900-.8 2.800-.4 2.800 1.400V18c0 3.500-2 6.500-5.500 6.500-3.500 0-4.900-1.500-6.400-4L1 15.500c-.7-1.800 1-2.800 2.300-1.400L6 17z" fill="#fff" stroke="#111" strokeWidth="1.100" />
            <path d="M9 9v5M11.800 10v4M14.600 11v3.500" stroke="#111" strokeWidth="1" />
          </svg>
        </Cursor>
      </Viewport>
      <Tasks />
    </Screen>
  );
}
